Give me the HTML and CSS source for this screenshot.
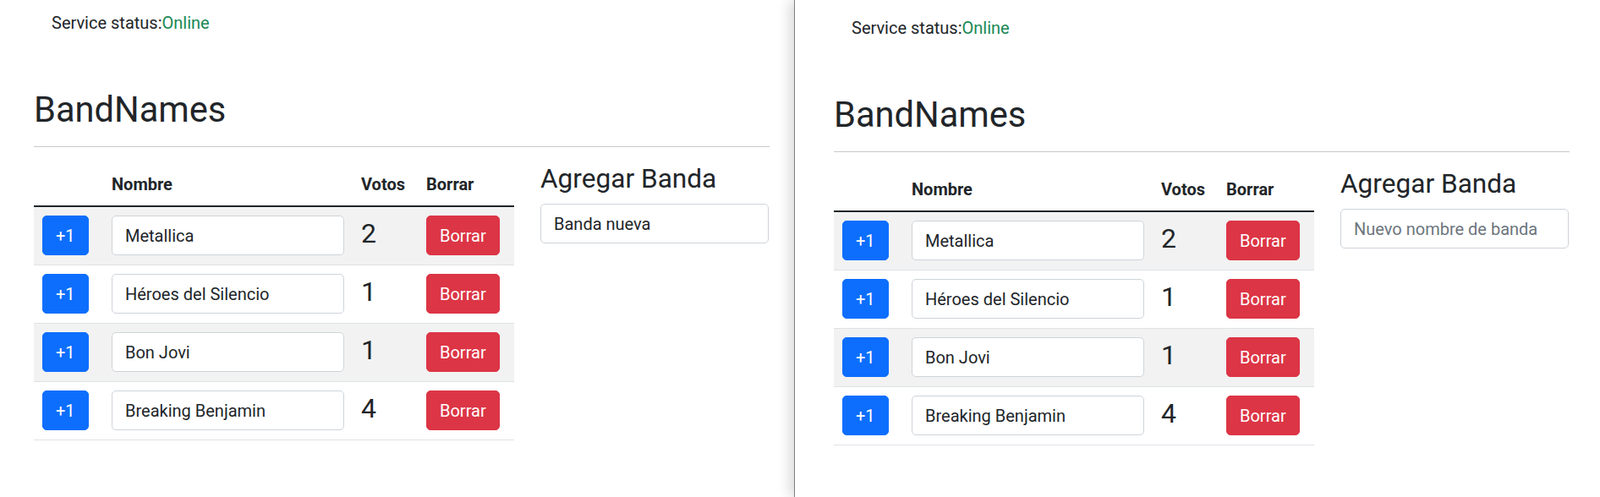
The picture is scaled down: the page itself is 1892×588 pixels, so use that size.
FILE: index.html
```html
<!DOCTYPE html>
<html lang="es">
<head>
<meta charset="utf-8">
<title>BandNames</title>
<link rel="stylesheet" href="styles.css">
</head>
<body>
<div class="desktop">
  <section class="window window-left">
    <div class="container">
      <p class="status">Service status:<span class="online">Online</span></p>
      <h1 class="title">BandNames</h1>
      <hr class="divider">
      <div class="layout">
        <table class="bands">
          <colgroup><col class="c1"><col class="c2"><col class="c3"><col class="c4"></colgroup>
          <thead>
            <tr><th></th><th>Nombre</th><th>Votos</th><th>Borrar</th></tr>
          </thead>
          <tbody>
            <tr class="odd"><td><button class="btn btn-primary">+1</button></td><td><input class="field" type="text" value="Metallica"></td><td><h3 class="votes">2</h3></td><td><button class="btn btn-danger">Borrar</button></td></tr>
            <tr><td><button class="btn btn-primary">+1</button></td><td><input class="field" type="text" value="Héroes del Silencio"></td><td><h3 class="votes">1</h3></td><td><button class="btn btn-danger">Borrar</button></td></tr>
            <tr class="odd"><td><button class="btn btn-primary">+1</button></td><td><input class="field" type="text" value="Bon Jovi"></td><td><h3 class="votes">1</h3></td><td><button class="btn btn-danger">Borrar</button></td></tr>
            <tr><td><button class="btn btn-primary">+1</button></td><td><input class="field" type="text" value="Breaking Benjamin"></td><td><h3 class="votes">4</h3></td><td><button class="btn btn-danger">Borrar</button></td></tr>
          </tbody>
        </table>
        <div class="add">
          <h3 class="add-title">Agregar Banda</h3>
          <input class="field" type="text" value="Banda nueva" placeholder="Nuevo nombre de banda">
        </div>
      </div>
    </div>
  </section>
  <section class="window window-right">
    <div class="container">
      <p class="status">Service status:<span class="online">Online</span></p>
      <h1 class="title">BandNames</h1>
      <hr class="divider">
      <div class="layout">
        <table class="bands">
          <colgroup><col class="c1"><col class="c2"><col class="c3"><col class="c4"></colgroup>
          <thead>
            <tr><th></th><th>Nombre</th><th>Votos</th><th>Borrar</th></tr>
          </thead>
          <tbody>
            <tr class="odd"><td><button class="btn btn-primary">+1</button></td><td><input class="field" type="text" value="Metallica"></td><td><h3 class="votes">2</h3></td><td><button class="btn btn-danger">Borrar</button></td></tr>
            <tr><td><button class="btn btn-primary">+1</button></td><td><input class="field" type="text" value="Héroes del Silencio"></td><td><h3 class="votes">1</h3></td><td><button class="btn btn-danger">Borrar</button></td></tr>
            <tr class="odd"><td><button class="btn btn-primary">+1</button></td><td><input class="field" type="text" value="Bon Jovi"></td><td><h3 class="votes">1</h3></td><td><button class="btn btn-danger">Borrar</button></td></tr>
            <tr><td><button class="btn btn-primary">+1</button></td><td><input class="field" type="text" value="Breaking Benjamin"></td><td><h3 class="votes">4</h3></td><td><button class="btn btn-danger">Borrar</button></td></tr>
          </tbody>
        </table>
        <div class="add">
          <h3 class="add-title">Agregar Banda</h3>
          <input class="field" type="text" placeholder="Nuevo nombre de banda">
        </div>
      </div>
    </div>
  </section>
</div>
</body>
</html>
```
FILE: styles.css
```css
* { box-sizing: border-box; }
html, body { margin: 0; padding: 0; }
body {
  font-family: "Segoe UI", Roboto, "Liberation Sans", sans-serif;
  font-size: 20px;
  line-height: 1.5;
  color: #212529;
  background: #fff;
  width: 1892px;
  height: 588px;
  overflow: hidden;
}
.desktop {
  display: flex;
  height: 588px;
}
.window {
  background: #fff;
  height: 588px;
}
.window-left {
  width: 939px;
  flex: none;
}
.window-right {
  flex: 1;
  border-left: 1px solid #7f7f7f;
  box-shadow: -6px 0 14px rgba(0, 0, 0, 0.14);
}
.window-left .container { padding: 12px 0 0 40px; }
.window-right .container { padding: 18px 0 0 46px; }
.container { width: 910px; }
.window-right .container { width: 916px; }

.status {
  margin: 0 0 0 21px;
  line-height: 30px;
}
.online { color: #198754; }

.title {
  margin: 63px 0 0;
  font-size: 41.6px;
  font-weight: 400;
  line-height: 50px;
}
.divider {
  margin: 18px 0 0;
  border: 0;
  border-top: 1px solid #c8c9ca;
  height: 0;
}
.layout {
  display: grid;
  grid-template-columns: 568px 270px;
  column-gap: 31px;
  margin-top: 19px;
  align-items: start;
}
.bands {
  border-collapse: collapse;
  table-layout: fixed;
  width: 568px;
}
.c1 { width: 82px; }
.c2 { width: 295px; }
.c3 { width: 77px; }
.c4 { width: 114px; }
.bands th {
  text-align: left;
  font-weight: 700;
  padding: 10px;
  line-height: 30px;
  border-bottom: 2px solid #212529;
}
.bands td {
  padding: 10px 10px 11px;
  vertical-align: top;
  border-bottom: 1px solid #dee2e6;
}
.bands tr.odd td { background: #f2f2f2; }

.btn {
  font-family: inherit;
  font-size: 20px;
  line-height: 30px;
  padding: 7.5px 15px;
  border: 1px solid transparent;
  border-radius: 5px;
  color: #fff;
  height: 47px;
  cursor: pointer;
}
.btn-primary { background: #0d6efd; border-color: #0d6efd; }
.btn-danger { background: #dc3545; border-color: #dc3545; }

.field {
  display: block;
  width: 100%;
  height: 47px;
  font-family: inherit;
  font-size: 20px;
  line-height: 30px;
  color: #212529;
  padding: 7.5px 15px;
  border: 1px solid #ced4da;
  border-radius: 5px;
  background: #fff;
}
.field::placeholder { color: #6c757d; opacity: 1; }

.votes {
  margin: 0;
  padding-top: 2px;
  font-size: 32px;
  font-weight: 400;
  line-height: 38px;
}
.add-title {
  margin: 0 0 10px;
  font-size: 31.6px;
  font-weight: 400;
  line-height: 38px;
}
```
